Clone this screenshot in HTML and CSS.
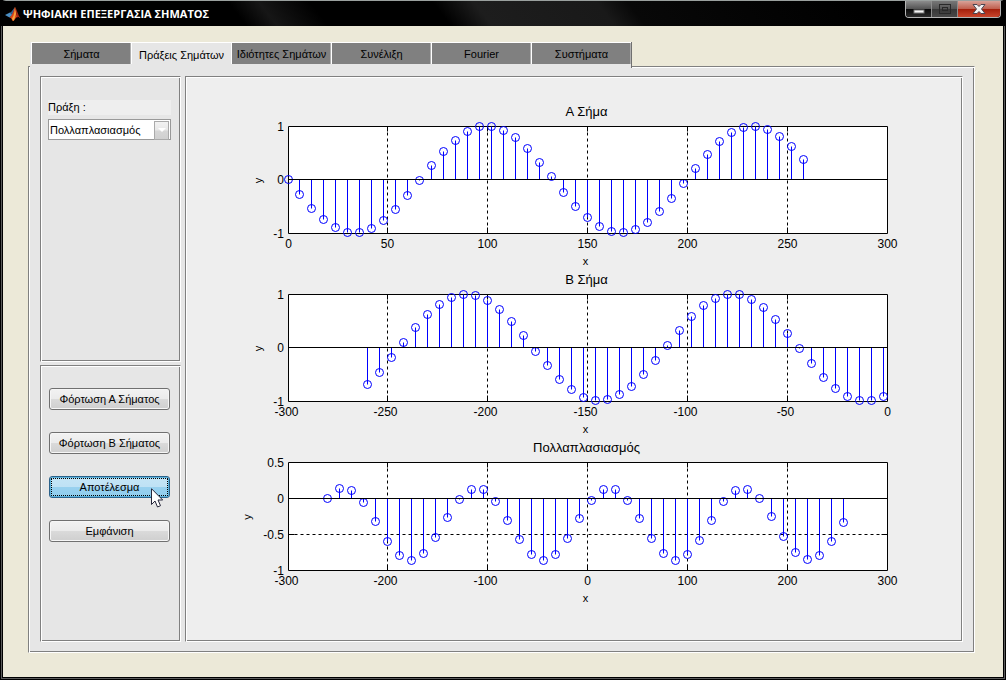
FILE: index.html
```html
<!DOCTYPE html>
<html lang="el">
<head>
<meta charset="utf-8">
<meta name="viewport" content="width=device-width, initial-scale=1">
<title>ΨΗΦΙΑΚΗ ΕΠΕΞΕΡΓΑΣΙΑ ΣΗΜΑΤΟΣ</title>
<link rel="stylesheet" href="styles.css">
</head>
<body>
<div class="window">
  <header class="titlebar">
    <svg class="logo" viewBox="0 0 16 16" aria-hidden="true">
      <path d="M0 9 L5 6.5 L7.500 9 L4.500 11.500 Z" fill="#4b8fc4"/>
      <path d="M5 6.500 C7 6 8 3 10 1 L7.500 9 Z" fill="#2e5f8f"/>
      <path d="M10 1 C8.500 4 8 9 4.500 11.500 C6.500 11.500 7 14.500 8 15 C10 14.500 10.500 11 12.500 11 C11 8 11 3 10 1 Z" fill="#d8431b"/>
      <path d="M10 1 C9.500 5 9.500 9 7 12.500 L8 15 C10 14 10 10 11 8 C10.500 5 10.500 3 10 1 Z" fill="#f7a13a"/>
      <path d="M10 1 C12 4 13 9 15.500 12.500 C14 11 13 10.500 12 11.500 C11 8 11 4 10 1 Z" fill="#a32413"/>
    </svg>
    <h1 class="caption">ΨΗΦΙΑΚΗ ΕΠΕΞΕΡΓΑΣΙΑ ΣΗΜΑΤΟΣ</h1>
    <div class="controls">
      <button class="control" type="button" aria-label="Ελαχιστοποίηση">
        <svg width="12" height="14" viewBox="0 0 12 14"><rect x="1" y="8" width="10" height="3" fill="#f4f4f4" stroke="#777" stroke-width="1"/></svg>
      </button>
      <button class="control" type="button" aria-label="Μεγιστοποίηση" disabled>
        <svg width="12" height="14" viewBox="0 0 12 14" fill="none" stroke="#292929"><rect x=".5" y="2.500" width="11" height="9"/><rect x="3.500" y="5.500" width="5" height="3"/></svg>
      </button>
      <button class="control control-close" type="button" aria-label="Κλείσιμο">
        <svg width="14" height="14" viewBox="0 0 14 14"><path d="M1 2.500H5L7 4.500L9 2.500H13L9.500 7L13 11.500H9L7 9.500L5 11.500H1L4.500 7Z" fill="#f2f2f2" stroke="#4a4450"/></svg>
      </button>
    </div>
  </header>

  <main class="content">
    <div class="tabs" role="tablist">
      <button class="tab" type="button" role="tab">Σήματα</button>
      <button class="tab tab-active" type="button" role="tab" aria-selected="true">Πράξεις Σημάτων</button>
      <button class="tab" type="button" role="tab">Ιδιότητες Σημάτων</button>
      <button class="tab" type="button" role="tab">Συνέλιξη</button>
      <button class="tab" type="button" role="tab">Fourier</button>
      <button class="tab" type="button" role="tab">Συστήματα</button>
    </div>
    <div class="page etched" role="tabpanel">
      <div class="sidebar">
        <section class="options etched">
          <label class="field-label" for="operation">Πράξη :</label>
          <span class="select-box">
            <select class="select" id="operation"><option>Πολλαπλασιασμός</option></select>
          </span>
        </section>
        <section class="actions etched">
          <button class="action" type="button">Φόρτωση Α Σήματος</button>
          <button class="action" type="button">Φόρτωση Β Σήματος</button>
          <button class="action action-focus" type="button">Αποτέλεσμα
            <svg class="pointer" width="13" height="21" viewBox="0 0 13 21" aria-hidden="true"><path d="M.5 .7V16.500L4 13L6.500 19L9.500 17.700L7 12H11.700Z" fill="#fff" stroke="#26263a"/></svg>
          </button>
          <button class="action" type="button">Εμφάνιση</button>
        </section>
      </div>
      <section class="plots etched">
        <svg class="plot" id="plot-a" role="img" aria-label="Α Σήμα"></svg>
        <svg class="plot" id="plot-b" role="img" aria-label="Β Σήμα"></svg>
        <svg class="plot" id="plot-c" role="img" aria-label="Πολλαπλασιασμός"></svg>
      </section>
    </div>
  </main>
</div>
<script src="plots.js"></script>
</body>
</html>
```
FILE: styles.css
```css
* {
  box-sizing: border-box;
}

body {
  margin: 0;
  background: #000;
  color: #000;
  font-family: "Liberation Sans", Arial, sans-serif;
  font-size: 11px;
}

button,
select {
  font: inherit;
  color: inherit;
}

.window {
  display: flex;
  flex-direction: column;
  min-height: 100vh;
  border: 1px solid #000;
  border-top-color: #9aa09e;
  border-radius: 6px 6px 0 0;
  background: #000;
}

.titlebar {
  position: relative;
  display: flex;
  align-items: center;
  height: 25px;
  flex: none;
  padding-left: 4px;
  background: linear-gradient(52deg, #000 24%, #161616 27%, #000 32%, #000 44%, #1d1d1d 48%, #191919 60%, #080808 63%, #000 85%);
}

.logo {
  width: 16px;
  height: 16px;
}

.caption {
  margin: 0 auto 0 2px;
  color: #fff;
  font-family: "Open Sans", "Noto Sans", sans-serif;
  font-size: 11px;
  font-weight: 700;
  white-space: nowrap;
}

.controls {
  display: flex;
  align-self: flex-start;
  height: 17px;
  margin-right: 4px;
  border: 1px solid #b5b5b5;
  border-top: 0;
  border-radius: 0 0 4px 4px;
  overflow: hidden;
}

.control {
  display: flex;
  align-items: center;
  justify-content: center;
  width: 26px;
  padding: 0;
  border: 0;
  border-right: 1px solid #8d8d8d;
  background: linear-gradient(#8c8c8c, #555 48%, #0a0a0a 52%, #2c2c2c);
}

.control:disabled {
  background: linear-gradient(#777, #555 48%, #383838 52%, #484848);
}

.control-close {
  width: 42px;
  border-right: 0;
  background: linear-gradient(#d8a298, #c0604f 48%, #a4200c 52%, #c8452c);
}

.content {
  display: flex;
  flex: 1;
  flex-direction: column;
  margin: 0 1px 1px;
  padding: 16px 28px 24px 25px;
  border: 1px solid #000;
  border-top: 0;
  outline: 1px solid #5a5a5a;
  background: #ece9d8;
}

.etched {
  border: 1px solid;
  border-color: #808080 #fff #fff #808080;
  box-shadow: inset 1px 1px #fff, inset -1px -1px #808080;
}

.tabs {
  position: relative;
  display: grid;
  grid-template-columns: repeat(6, minmax(0, 100px));
  align-self: flex-start;
  height: 26px;
  margin: 0 0 -2px 2px;
  padding: 0 0 4px 1px;
  border-right: 1px solid #707070;
  background: #e6e6e6;
}

.tab {
  padding: 0;
  border: 1px solid #fff;
  border-width: 1px 0 0 1px;
  background: #808080;
  box-shadow: inset -1px 0 #b0b0b0;
  white-space: nowrap;
}

.tab-active {
  padding-top: 2px;
  background: #e6e6e6;
  box-shadow: none;
}

.page {
  display: flex;
  flex: 1;
  gap: 4px;
  padding: 9px 11px 10px;
  background: #e6e6e6;
}

.sidebar {
  display: grid;
  grid-template-rows: 285fr 277fr;
  flex: none;
  gap: 3px;
  width: 141px;
}

.options {
  padding: 23px 9px 0 7px;
}

.field-label {
  display: block;
  margin-bottom: 4px;
  background: #eee;
  line-height: 15px;
}

.select-box {
  position: relative;
  display: block;
}

.select {
  width: 100%;
  height: 21px;
  padding: 0 16px 0 1px;
  border: 1px solid #999;
  border-radius: 0;
  background: #fff;
  appearance: none;
}

.select-box::before {
  content: "";
  position: absolute;
  top: 2px;
  right: 2px;
  width: 13px;
  height: 17px;
  border: 1px solid #aaa;
  background: linear-gradient(#f2f2f2, #e8e8e8 48%, #d6d6d6 52%, #d0d0d0);
  pointer-events: none;
}

.select-box::after {
  content: "";
  position: absolute;
  top: 9px;
  right: 5px;
  border: 4px solid transparent;
  border-top-color: #fff;
  border-bottom: 0;
  pointer-events: none;
}

.actions {
  display: flex;
  flex-direction: column;
  gap: 22px;
  padding: 22px 10px 22px 8px;
}

.action {
  position: relative;
  height: 22px;
  padding: 0;
  border: 1px solid #707070;
  border-radius: 3px;
  background: linear-gradient(#f2f2f2, #ebebeb 48%, #dadada 52%, #cfcfcf);
  box-shadow: inset 0 0 0 1px #f6f6f6;
  white-space: nowrap;
}

.action-focus {
  border-color: #2c628b;
  background: linear-gradient(#c4e5f6, #bfe2f5 48%, #98d1ef 52%, #8fcdee);
  box-shadow: inset 0 0 0 1px #5cb3dc;
  outline: 1px dotted #000;
  outline-offset: -3px;
}

.pointer {
  position: absolute;
  left: 101px;
  top: 11px;
}

.plots {
  flex: 1;
  min-width: 0;
  padding: 25px 0 33px;
  background: #eee;
}

.plot {
  display: block;
  width: 100%;
  height: 168px;
  font-size: 12px;
}

.plot-title {
  font-size: 13px;
}

.axis-name {
  font-size: 11px;
}

.plot-area {
  fill: #fff;
}

.frame,
.grid,
.stem,
.marker {
  fill: none;
}

.frame,
.grid {
  stroke: #000;
}

.grid {
  stroke-dasharray: 3 3;
}

.stem,
.marker {
  stroke: #00f;
}
```
FILE: plots.js
```js
const COUNT = 44;
const PERIOD = 133;
const wave = t => Math.sin(2 * Math.PI * t / PERIOD);
const indices = Array.from({ length: COUNT }, (_, i) => i);

const signalA = indices.map(i => [6 * i, -wave(6 * i)]);
const signalB = indices.map(i => [-260 + 6 * i, wave(-260 + 6 * i + 243.9)]);
const product = indices.map(i => [-260 + 12 * i, signalA[i][1] * signalB[i][1]]);

const plots = [
  { id: 'plot-a', title: 'Α Σήμα', x: [0, 50, 100, 150, 200, 250, 300], y: [1, 0, -1], height: 107, nameX: 78, data: signalA },
  { id: 'plot-b', title: 'Β Σήμα', x: [-300, -250, -200, -150, -100, -50, 0], y: [1, 0, -1], height: 107, nameX: 78, data: signalB },
  { id: 'plot-c', title: 'Πολλαπλασιασμός', x: [-300, -200, -100, 0, 100, 200, 300], y: [0.5, 0, -0.5, -1], height: 108, nameX: 67, data: product }
];

const LEFT = 102;
const RIGHT = 75;
const TOP = 24;

function draw(plot) {
  const svg = document.getElementById(plot.id);
  const right = svg.clientWidth - RIGHT;
  const bottom = TOP + plot.height;
  const xMin = plot.x[0], xMax = plot.x[plot.x.length - 1];
  const yMax = plot.y[0], yMin = plot.y[plot.y.length - 1];
  const px = v => Math.floor(LEFT + (v - xMin) / (xMax - xMin) * (right - LEFT)) + 0.5;
  const py = v => Math.floor(TOP + (yMax - v) / (yMax - yMin) * plot.height) + 0.5;
  const middle = (LEFT + right) / 2;
  const l = LEFT + 0.5, r = right + 0.5, t = TOP + 0.5, b = bottom + 0.5;
  const text = (x, y, anchor, value, cls = '') =>
    `<text class="${cls}" x="${x}" y="${y}" text-anchor="${anchor}">${value}</text>`;

  let out = `<rect class="plot-area" x="${LEFT}" y="${TOP}" width="${right - LEFT}" height="${plot.height}"/>`;
  for (const v of plot.x.slice(1, -1)) {
    out += `<path class="grid" d="M${px(v)} ${t}V${b}"/>`;
    out += `<path class="frame" d="M${px(v)} ${t}v5M${px(v)} ${b}v-6"/>`;
  }
  for (const v of plot.y.slice(1, -1)) {
    if (v !== 0) {
      out += `<path class="grid" d="M${l} ${py(v)}H${r}"/>`;
      out += `<path class="frame" d="M${l} ${py(v)}h6M${r} ${py(v)}h-6"/>`;
    }
  }
  out += `<path class="frame" d="M${l} ${t}H${r}V${b}H${l}Z"/>`;
  for (const [x, y] of plot.data) {
    out += `<path class="stem" d="M${px(x)} ${py(0)}V${py(y)}"/>`;
    out += `<circle class="marker" cx="${px(x)}" cy="${py(y)}" r="4"/>`;
  }
  out += `<path class="frame" d="M${l} ${py(0)}H${r}"/>`;
  for (const v of plot.x) {
    out += text(px(v) - (v < 0 ? 2 : 0), bottom + 15, 'middle', v);
  }
  for (const v of plot.y) {
    out += text(LEFT - 4, py(v) + 4, 'end', v);
  }
  out += text(middle - 1, 14, 'middle', plot.title, 'plot-title');
  out += text(middle - 2, bottom + 32, 'middle', 'x', 'axis-name');
  out += `<text class="axis-name" text-anchor="middle" transform="translate(${plot.nameX - 2} ${TOP + plot.height / 2 + 1}) rotate(-90)">y</text>`;
  svg.innerHTML = out;
}

function drawAll() {
  plots.forEach(draw);
}

drawAll();
window.addEventListener('resize', drawAll);
```
